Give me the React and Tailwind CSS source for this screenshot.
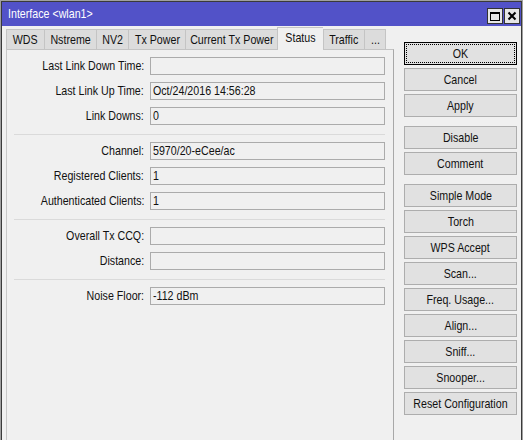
import React from "react";

const tabs = [
  { name: "WDS", w: "w-[38px]" },
  { name: "Nstreme", w: "w-[52px]" },
  { name: "NV2", w: "w-[32px]" },
  { name: "Tx Power", w: "w-[57px]" },
  { name: "Current Tx Power", w: "w-[92px]" },
  { name: "Status", w: "w-[46px]", active: true },
  { name: "Traffic", w: "w-[41px]" },
  { name: "...", w: "w-[22px]", last: true },
];

const groups = [
  [
    ["Last Link Down Time", ""],
    ["Last Link Up Time", "Oct/24/2016 14:56:28"],
    ["Link Downs", "0"],
  ],
  [
    ["Channel", "5970/20-eCee/ac"],
    ["Registered Clients", "1"],
    ["Authenticated Clients", "1"],
  ],
  [
    ["Overall Tx CCQ", ""],
    ["Distance", ""],
  ],
  [["Noise Floor", "-112 dBm"]],
];

const buttonGroups = [
  ["OK", "Cancel", "Apply"],
  ["Disable", "Comment"],
  [
    "Simple Mode",
    "Torch",
    "WPS Accept",
    "Scan...",
    "Freq. Usage...",
    "Align...",
    "Sniff...",
    "Snooper...",
    "Reset Configuration",
  ],
];

// the window font is a narrow sans; squeeze Liberation Sans to match
function Narrow({ children, origin = "origin-center" }) {
  return (
    <span className={`inline-block whitespace-nowrap scale-x-[0.82] ${origin}`}>
      {children}
    </span>
  );
}

function Field({ label, value }) {
  return (
    <div className="flex items-center h-[18px]">
      <div className="w-[137px] text-right leading-[18px]">
        <Narrow origin="origin-right">{label}:</Narrow>
      </div>
      <div className="ml-[6px] w-[235px] h-[18px] border border-[#ababab] bg-[#f0f0f0] pl-[2px] leading-[16px]">
        {value && <Narrow origin="origin-left">{value}</Narrow>}
      </div>
    </div>
  );
}

function Button({ label }) {
  if (label === "OK") {
    return (
      <div className="h-[23px] border border-black bg-[#e1e1e1] p-px">
        <div className="h-full border border-dotted border-black flex items-center justify-center">
          <Narrow>{label}</Narrow>
        </div>
      </div>
    );
  }
  return (
    <div className="h-[23px] border border-[#adadad] bg-[#e1e1e1] flex items-center justify-center">
      <Narrow>{label}</Narrow>
    </div>
  );
}

export default function App() {
  return (
    <div className="w-[523px] h-[440px] overflow-hidden bg-[#a0a0a0] pt-px pl-px text-[13px] text-[#111] font-['Liberation_Sans',Arial,sans-serif]">
      <div className="w-[521px] h-[439px] border-t border-l border-r border-[#3a3a3a] bg-[#f0f0f0] flex flex-col">
        {/* title bar */}
        <div className="h-[24px] bg-[#5252c8] flex items-end justify-between pb-[2px]">
          <div className="self-center pl-[6px] pt-px text-white leading-none">
            <Narrow origin="origin-left">Interface &lt;wlan1&gt;</Narrow>
          </div>
          <div className="flex gap-px pr-px">
            <div className="w-[16px] h-[16px] border border-[#333] bg-[#e6e6e6] flex items-center justify-center">
              <div className="w-[10px] h-[9px] border border-black border-t-2" />
            </div>
            <div className="w-[16px] h-[16px] border border-[#333] bg-[#e6e6e6] flex items-center justify-center">
              <svg width="10" height="10" viewBox="0 0 10 10">
                <path d="M1.5 1.5 L8.5 8.5 M8.5 1.5 L1.5 8.5" stroke="black" strokeWidth="2" />
              </svg>
            </div>
          </div>
        </div>

        <div className="flex flex-1">
          {/* left tabbed area */}
          <div className="ml-[4px] w-[388px] flex flex-col">
            <div className="flex items-end h-[23px]">
              {tabs.map((t) => (
                <div
                  key={t.name}
                  className={
                    t.active
                      ? `${t.w} h-[23px] -mb-px relative z-10 bg-[#f0f0f0] border-t border-l border-[#c4c4c4] flex items-center justify-center pb-[3px]`
                      : `${t.w} h-[20px] bg-[#dcdcdc] border-t border-l ${t.last ? "border-r" : ""} border-[#c4c4c4] flex items-center justify-center`
                  }
                >
                  <Narrow>{t.name}</Narrow>
                </div>
              ))}
            </div>
            <div className="flex-1 border-t border-l border-r border-t-[#c4c4c4] border-l-[#c8c8c8] border-r-[#a8a8a8] pt-[7px]">
              {groups.map((g, gi) => (
                <div key={gi}>
                  {gi > 0 && (
                    <div className="mt-[9px] mb-[7px] ml-[7px] w-[371px] h-px bg-[#dadada]" />
                  )}
                  <div className="flex flex-col gap-[7px]">
                    {g.map(([label, value]) => (
                      <Field key={label} label={label} value={value} />
                    ))}
                  </div>
                </div>
              ))}
            </div>
          </div>

          {/* right buttons */}
          <div className="ml-[10px] w-[113px] pt-[16px] flex flex-col gap-[9px]">
            {buttonGroups.map((g, gi) => (
              <div key={gi} className="flex flex-col gap-[3px]">
                {g.map((b) => (
                  <Button key={b} label={b} />
                ))}
              </div>
            ))}
          </div>
        </div>
      </div>
    </div>
  );
}
